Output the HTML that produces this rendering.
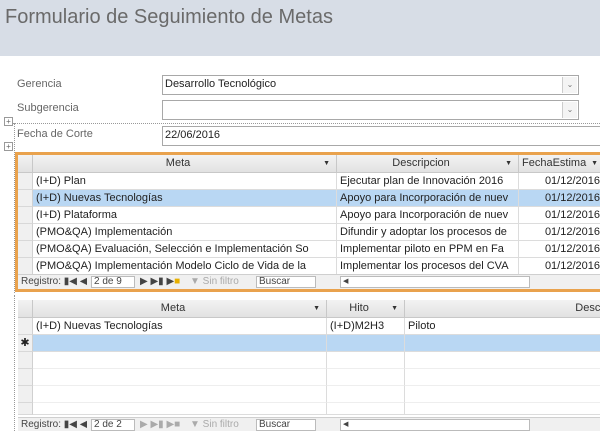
<!DOCTYPE html>
<html><head><meta charset="utf-8"><style>
*{margin:0;padding:0;box-sizing:border-box}
body{width:600px;height:431px;overflow:hidden;background:#fff;font-family:"Liberation Sans",sans-serif;font-size:11px;color:#222;position:relative}
.a{position:absolute;white-space:nowrap;overflow:hidden}
.hdr{left:0;top:0;width:600px;height:56px;background:#d7dde6}
.title{left:5px;top:6px;font-size:20px;color:#6a6a6a}
.lbl{color:#666;font-size:11px}
.box{border:1px solid #a8a8a8;background:#fff;padding:2px 2px;font-size:11px}
.dd{position:absolute;right:1px;top:1px;width:15px;height:16px;border-left:1px solid #ccc;background:#f4f4f4;color:#777;font-size:8px;text-align:center;line-height:16px}
.th{background:linear-gradient(#f3f3f3,#e2e2e2);border-right:1px solid #c8c8c8;border-bottom:1px solid #c8c8c8;text-align:center;color:#333;line-height:17px;height:18px}
.td{border-right:1px solid #dcdcdc;border-bottom:1px solid #dcdcdc;line-height:16px;height:17px;padding-left:3px}
.sel{background:#f0f0f0;border-right:1px solid #d0d0d0;border-bottom:1px solid #d8d8d8;height:17px}
.nav{background:#f0f0f0;border-top:1px solid #cfcfcf;height:15px;font-size:10px;color:#444;line-height:14px}
.ar{float:right;font-size:7px;margin-right:6px}
</style></head><body>
<div class="a hdr"></div>
<div class="a title">Formulario de Seguimiento de Metas</div>

<div class="a lbl" style="left:17px;top:78px">Gerencia</div>
<div class="a box" style="left:162px;top:75px;width:417px;height:20px">Desarrollo Tecnológico<div class="dd">&#8964;</div></div>
<div class="a lbl" style="left:17px;top:102px">Subgerencia</div>
<div class="a box" style="left:162px;top:100px;width:417px;height:20px"><div class="dd">&#8964;</div></div>
<div class="a" style="left:4px;top:117px;width:9px;height:9px;border:1px solid #999;font-size:8px;line-height:7px;text-align:center;color:#666">+</div>
<div class="a" style="left:12px;top:123px;width:588px;border-top:1px dotted #999"></div>
<div class="a" style="left:14px;top:123px;height:170px;border-left:1px dotted #999"></div>
<div class="a lbl" style="left:17px;top:128px">Fecha de Corte</div>
<div class="a box" style="left:162px;top:126px;width:440px;height:20px">22/06/2016</div>
<div class="a" style="left:4px;top:142px;width:9px;height:9px;border:1px solid #999;font-size:8px;line-height:7px;text-align:center;color:#666">+</div>

<!-- subform 1 -->
<div class="a" style="left:15px;top:152px;width:590px;height:140px;border:3px solid #e9a24d;border-right:none;background:#fff"></div>
<div class="a" style="left:18px;top:155px;width:582px;height:134px">
 <div class="a th" style="left:0;top:0;width:15px"></div>
 <div class="a th" style="left:15px;top:0;width:304px">Meta<span class="ar">&#9660;</span></div>
 <div class="a th" style="left:319px;top:0;width:182px">Descripcion<span class="ar">&#9660;</span></div>
 <div class="a th" style="left:501px;top:0;width:90px;text-align:left;padding-left:3px">FechaEstima<span class="ar" style="margin-right:10px">&#9660;</span></div>
 <div class="a" style="left:0;top:18px;width:600px">
  <div style="display:flex"><div class="sel" style="width:15px"></div><div class="td" style="width:304px">(I+D) Plan</div><div class="td" style="width:182px">Ejecutar plan de Innovación 2016</div><div class="td" style="width:90px;text-align:right;padding-right:8px">01/12/2016</div></div>
  <div style="display:flex;background:#b9d7f3"><div class="sel" style="width:15px"></div><div class="td" style="width:304px">(I+D) Nuevas Tecnologías</div><div class="td" style="width:182px">Apoyo para Incorporación de nuev</div><div class="td" style="width:90px;text-align:right;padding-right:8px">01/12/2016</div></div>
  <div style="display:flex"><div class="sel" style="width:15px"></div><div class="td" style="width:304px">(I+D) Plataforma</div><div class="td" style="width:182px">Apoyo para Incorporación de nuev</div><div class="td" style="width:90px;text-align:right;padding-right:8px">01/12/2016</div></div>
  <div style="display:flex"><div class="sel" style="width:15px"></div><div class="td" style="width:304px">(PMO&amp;QA) Implementación</div><div class="td" style="width:182px">Difundir y adoptar los procesos de</div><div class="td" style="width:90px;text-align:right;padding-right:8px">01/12/2016</div></div>
  <div style="display:flex"><div class="sel" style="width:15px"></div><div class="td" style="width:304px">(PMO&amp;QA) Evaluación, Selección e Implementación So</div><div class="td" style="width:182px">Implementar piloto en PPM en Fa</div><div class="td" style="width:90px;text-align:right;padding-right:8px">01/12/2016</div></div>
  <div style="display:flex"><div class="sel" style="width:15px"></div><div class="td" style="width:304px">(PMO&amp;QA) Implementación Modelo Ciclo de Vida de la</div><div class="td" style="width:182px">Implementar los procesos del CVA</div><div class="td" style="width:90px;text-align:right;padding-right:8px">01/12/2016</div></div>
 </div>
 <div class="a nav" style="left:0;top:119px;width:600px">
  <span class="a" style="left:3px">Registro: &#9646;&#9664; &#9664;</span>
  <span class="a" style="left:73px;top:1px;width:44px;height:12px;background:#fff;border:1px solid #bbb;line-height:10px;padding-left:2px">2 de 9</span>
  <span class="a" style="left:122px">&#9654; &#9654;&#9646; &#9654;<span style="color:#e8b000">&#9632;</span></span>
  <span class="a" style="left:172px;color:#aaa">&#9660; Sin filtro</span>
  <span class="a" style="left:238px;top:1px;width:60px;height:12px;background:#fff;border:1px solid #bbb;line-height:10px;padding-left:2px">Buscar</span>
  <span class="a" style="left:322px;top:1px;width:190px;height:12px;background:#fff;border:1px solid #bbb;line-height:10px;font-size:7px;padding-left:2px">&#9664;</span>
 </div>
</div>

<!-- subform 2 -->
<div class="a" style="left:14px;top:295px;height:136px;border-left:1px dotted #999"></div>
<div class="a" style="left:18px;top:300px;width:582px;height:131px">
 <div class="a th" style="left:0;top:0;width:15px"></div>
 <div class="a th" style="left:15px;top:0;width:294px">Meta<span class="ar">&#9660;</span></div>
 <div class="a th" style="left:309px;top:0;width:78px">Hito<span class="ar">&#9660;</span></div>
 <div class="a th" style="left:387px;top:0;width:200px;text-align:right;padding-right:0">Descr</div>
 <div class="a" style="left:0;top:18px;width:600px">
  <div style="display:flex"><div class="sel" style="width:15px"></div><div class="td" style="width:294px">(I+D) Nuevas Tecnologías</div><div class="td" style="width:78px">(I+D)M2H3</div><div class="td" style="width:200px">Piloto</div></div>
  <div style="display:flex;background:#b9d7f3"><div class="sel" style="width:15px;text-align:center;line-height:16px">&#10033;</div><div class="td" style="width:294px"></div><div class="td" style="width:78px"></div><div class="td" style="width:200px"></div></div>
  <div style="display:flex"><div class="sel" style="width:15px"></div><div class="td" style="width:294px;border-bottom-color:#eee"></div><div class="td" style="width:78px;border-bottom-color:#eee"></div><div class="td" style="width:200px;border-bottom-color:#eee"></div></div>
  <div style="display:flex"><div class="sel" style="width:15px"></div><div class="td" style="width:294px;border-bottom-color:#eee"></div><div class="td" style="width:78px;border-bottom-color:#eee"></div><div class="td" style="width:200px;border-bottom-color:#eee"></div></div>
  <div style="display:flex"><div class="sel" style="width:15px"></div><div class="td" style="width:294px;border-bottom-color:#eee"></div><div class="td" style="width:78px;border-bottom-color:#eee"></div><div class="td" style="width:200px;border-bottom-color:#eee"></div></div>
  <div style="display:flex"><div class="sel" style="width:15px;height:12px"></div><div class="td" style="width:294px;height:12px"></div><div class="td" style="width:78px;height:12px"></div><div class="td" style="width:200px;height:12px"></div></div>
 </div>
 <div class="a nav" style="left:0;top:117px;width:600px">
  <span class="a" style="left:3px">Registro: &#9646;&#9664; &#9664;</span>
  <span class="a" style="left:73px;top:1px;width:44px;height:12px;background:#fff;border:1px solid #bbb;line-height:10px;padding-left:2px">2 de 2</span>
  <span class="a" style="left:122px;color:#aaa">&#9654; &#9654;&#9646; &#9654;&#9632;</span>
  <span class="a" style="left:172px;color:#aaa">&#9660; Sin filtro</span>
  <span class="a" style="left:238px;top:1px;width:60px;height:12px;background:#fff;border:1px solid #bbb;line-height:10px;padding-left:2px">Buscar</span>
  <span class="a" style="left:322px;top:1px;width:190px;height:12px;background:#fff;border:1px solid #bbb;line-height:10px;font-size:7px;padding-left:2px">&#9664;</span>
 </div>
</div>
</body></html>
